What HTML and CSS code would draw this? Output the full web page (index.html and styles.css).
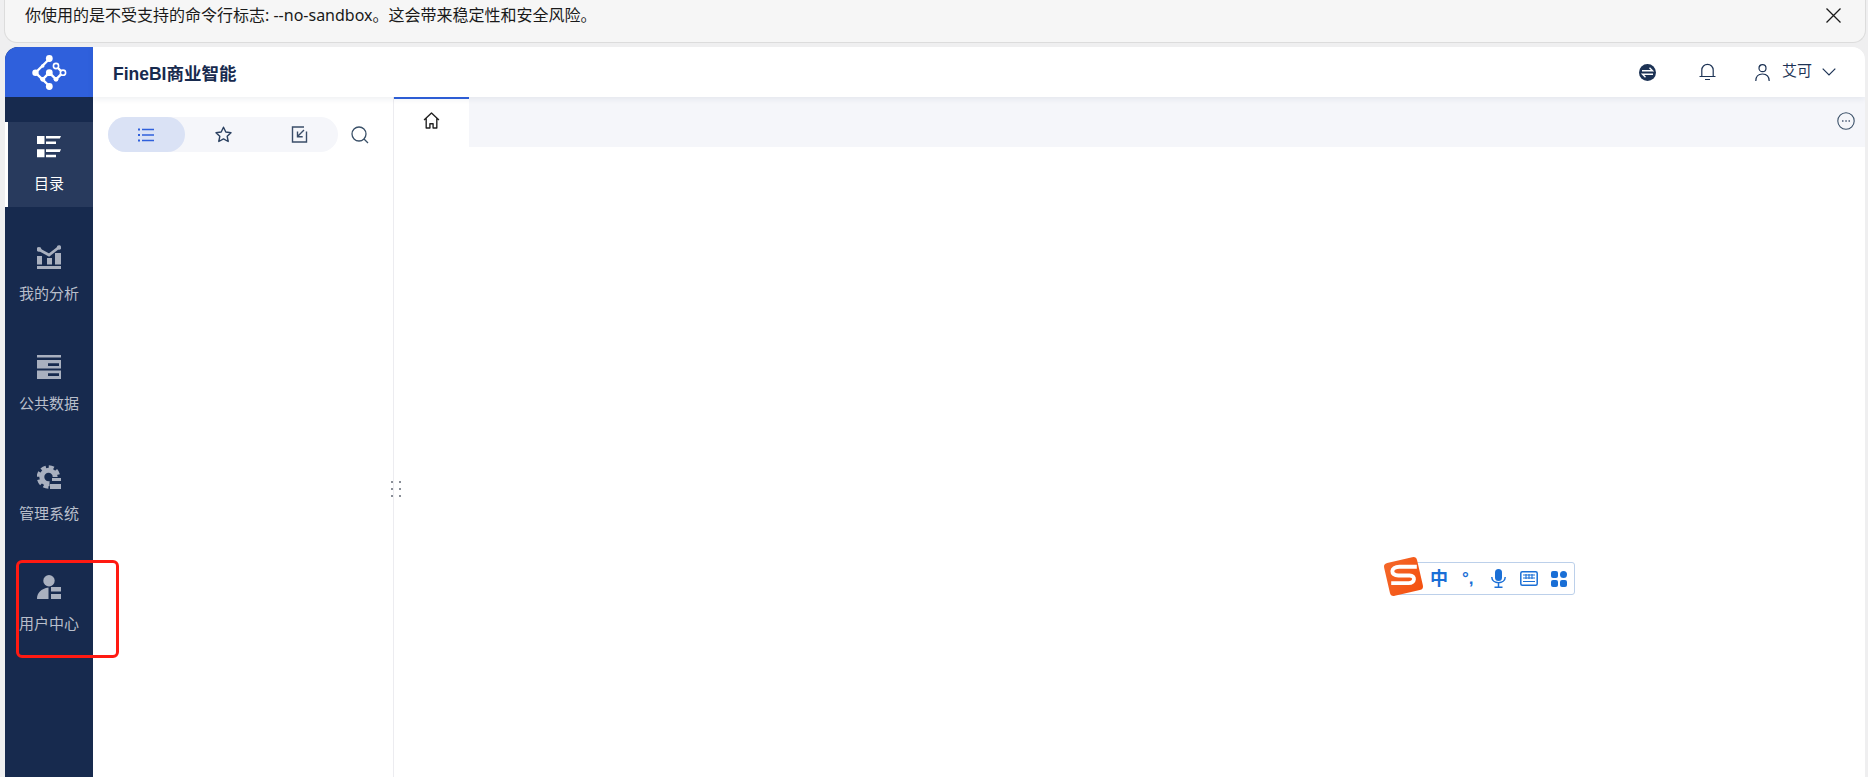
FILE: index.html
```html
<!DOCTYPE html>
<html lang="zh">
<head>
<meta charset="utf-8">
<title>FineBI</title>
<link rel="stylesheet" href="styles.css">
</head>
<body>
<div class="infobar">
  <span class="infobar-text">你使用的是不受支持的命令行标志: --no-sandbox。这会带来稳定性和安全风险。</span>
  <svg class="infobar-close" viewBox="0 0 15 15"><path d="M.5.500L14.500 14.500M14.500.500L.5 14.500" fill="none" stroke="#1a1a1a" stroke-width="1.300"/></svg>
</div>
<div class="window">
  <aside class="sidebar">
    <div class="logo">
      <svg viewBox="0 0 35 35" width="35" height="35">
        <g fill="none" stroke="#fff" stroke-width="2.400"><path d="M17.300 4L3.500 17.700L17.300 31M17.300 17.700L10.700 24.300M17.300 17.700L24 24.300L30.700 17.700L24 11"/></g>
        <g fill="#fff"><circle cx="17.300" cy="3.500" r="3.400"/><circle cx="3.500" cy="17.700" r="3.200"/><circle cx="17.300" cy="31.500" r="3.400"/><circle cx="17.300" cy="17.700" r="3.400"/><circle cx="10.700" cy="11" r="1.800"/><circle cx="10.700" cy="24.300" r="2.400"/><circle cx="24" cy="24.300" r="2.400"/></g>
        <g fill="#2f60dc" stroke="#fff" stroke-width="1.600"><circle cx="31" cy="17.700" r="2.600"/><circle cx="24" cy="11" r="2.600"/></g>
      </svg>
    </div>
    <nav class="nav">
      <div class="nav-item active">
        <svg class="nav-icon" viewBox="0 0 24 24"><path fill="#fff" d="M0 1h7.500v8H0zM9 1h15l-1.200 2.600H9zM9 6.400h10V9H9zM0 14.300h7.500v8H0zM9 14.300h15l-1.200 2.600H9zM9 19.700h10v2.600H9z"/></svg>
        <span class="nav-label">目录</span>
      </div>
      <div class="nav-item">
        <svg class="nav-icon" viewBox="0 0 24 24"><path fill="#a9b0bf" d="M0 21h24v3H0zM0 11h5v8.500H0zM10 13h5v6.500h-5zM18 8h6v11.500h-6z"/><path fill="none" stroke="#a9b0bf" stroke-width="2.800" d="M1 4l11 6L23 1.500"/><circle cx="2" cy="4.300" r="2.400" fill="#a9b0bf"/><circle cx="22" cy="2.500" r="2.200" fill="#a9b0bf"/></svg>
        <span class="nav-label">我的分析</span>
      </div>
      <div class="nav-item">
        <svg class="nav-icon" viewBox="0 0 24 24"><path fill="#a9b0bf" fill-rule="evenodd" d="M0 0h24v2.600H0zM0 5h24v8.600H0zM11 8.300V11h11V8.300zM0 15.600h24V24H0zM11 18.300V21h11v-2.700z"/></svg>
        <span class="nav-label">公共数据</span>
      </div>
      <div class="nav-item">
        <svg class="nav-icon" viewBox="0 0 24 24">
          <circle cx="11.500" cy="12" r="6.700" fill="none" stroke="#a9b0bf" stroke-width="5"/>
          <circle cx="11.500" cy="12" r="10" fill="none" stroke="#a9b0bf" stroke-width="3.500" stroke-dasharray="5 2.850"/>
          <rect class="gear-cut" x="12.500" y="12" width="12" height="12"/>
          <path fill="#a9b0bf" d="M15 13h9v3h-9zM13 19h11v5H13z"/>
        </svg>
        <span class="nav-label">管理系统</span>
      </div>
      <div class="nav-item">
        <svg class="nav-icon" viewBox="0 0 24 24"><circle cx="12" cy="5.700" r="5.700" fill="#a9b0bf"/><path fill="#a9b0bf" d="M0 24c0-6 4-10.500 11.500-11.500V24zM14 12h10v4.500H14zM14 19h10v5H14z"/></svg>
        <span class="nav-label">用户中心</span>
      </div>
    </nav>
  </aside>
  <div class="main">
    <header class="header">
      <span class="brand">FineBI商业智能</span>
      <div class="header-tools">
        <svg class="tool-swap" viewBox="0 0 17 17"><circle cx="8.500" cy="8.500" r="8.500" fill="#1d3355"/><path d="M3 6.800h10.500L10.500 3.800M14 10.200H3.500L6.500 13.200" fill="none" stroke="#fff" stroke-width="1.400"/></svg>
        <svg class="tool-bell" viewBox="0 0 17 18"><path d="M2.800 13V7a5.700 5.700 0 0 1 11.400 0v6M.5 13.500h16M6 16.500h5" fill="none" stroke="#1d3355" stroke-width="1.200"/></svg>
        <div class="user">
          <svg class="user-icon" viewBox="0 0 15 17"><circle cx="7.500" cy="4.200" r="3.500" fill="none" stroke="#1d3355" stroke-width="1.200"/><path d="M.8 17c0-4.500 2.500-7 6.700-7s6.700 2.500 6.700 7" fill="none" stroke="#1d3355" stroke-width="1.200"/></svg>
          <span class="user-name">艾可</span>
          <svg class="user-caret" viewBox="0 0 14 8"><path d="M.7.700L7 7l6.300-6.300" fill="none" stroke="#1d3355" stroke-width="1.200"/></svg>
        </div>
      </div>
    </header>
    <div class="body">
      <section class="panel">
        <div class="panel-top">
          <div class="seg">
            <div class="seg-item selected">
              <svg class="seg-list" viewBox="0 0 16 14"><path d="M4 1.500h12M4 7h12M4 12.500h12" stroke="#2f60dc" stroke-width="1.300" fill="none"/><path d="M0 .5h2v2H0zM0 6h2v2H0zM0 11.500h2v2H0z" fill="#2f60dc"/></svg>
            </div>
            <div class="seg-item">
              <svg class="seg-icon" viewBox="0 0 17 17"><path d="M8.500 1.200l2.300 4.800 5.200.7-3.800 3.600 1 5.200-4.700-2.600-4.700 2.600 1-5.200L1 6.700l5.200-.7z" fill="none" stroke="#2a4060" stroke-width="1.400" stroke-linejoin="round"/></svg>
            </div>
            <div class="seg-item">
              <svg class="seg-icon" viewBox="0 0 17 17"><path d="M13 1H1.500v15h14V5.500" fill="none" stroke="#3a4d68" stroke-width="1.400"/><path d="M13 4L7 10M6.500 5.500v5.200h5.200" fill="none" stroke="#3a4d68" stroke-width="1.400"/></svg>
            </div>
          </div>
          <svg class="search" viewBox="0 0 18 18"><circle cx="8" cy="8" r="7" fill="none" stroke="#3a5068" stroke-width="1.300"/><path d="M13 13l4 4" stroke="#3a5068" stroke-width="1.300"/></svg>
        </div>
      </section>
      <section class="content">
        <div class="tabs">
          <div class="tab">
            <svg class="home" viewBox="0 0 16 16"><path d="M1 7.500L8 1l7 6.500M3 6v9h3.500v-4h3v4H13V6" fill="none" stroke="#222" stroke-width="1.300" stroke-linejoin="round"/></svg>
          </div>
          <svg class="more" viewBox="0 0 18 18"><circle cx="9" cy="9" r="8.200" fill="none" stroke="#3a5068" stroke-width="1.100"/><path d="M5 8.200h1.500v1.500H5zM8.300 8.200h1.500v1.500H8.300zM11.500 8.200H13v1.500h-1.500z" fill="#4a5c76"/></svg>
        </div>
      </section>
    </div>
  </div>
</div>
<div class="grip"><i></i><i></i><i></i><i></i><i></i><i></i></div>
<div class="ime">
  <svg class="ime-logo" viewBox="0 0 40 40">
    <defs><linearGradient id="imeOrange" x1="0" y1="0" x2="1" y2="1"><stop offset="0" stop-color="#f4682a"/><stop offset="1" stop-color="#f4500f"/></linearGradient></defs>
    <rect x="3.500" y="3.500" width="33" height="33" rx="4" fill="url(#imeOrange)" transform="rotate(-13 20 20)"/>
    <path d="M33 10.500H16c-9 0-9 8.500-1 8.500h11c6 0 5.500 7.500-1 7.500H8" fill="none" stroke="#fff" stroke-width="3.800"/>
  </svg>
  <span class="ime-zh">中</span>
  <span class="ime-punct">°,</span>
  <svg class="ime-mic" viewBox="0 0 15 19"><rect x="4" y="0" width="7" height="12" rx="3.500" fill="#1a6fd6"/><path d="M.8 8c0 7.500 13.400 7.500 13.400 0M7.500 14v4M3.500 18.300h8" fill="none" stroke="#1a6fd6" stroke-width="1.500"/></svg>
  <svg class="ime-keys" viewBox="0 0 18 15"><rect x=".8" y=".8" width="16.400" height="13.400" rx="1.500" fill="none" stroke="#1a6fd6" stroke-width="1.500"/><path d="M3 4h12M3 7h12M3 10.500h12M6 3v5M9 3v5M12 3v5" stroke="#1a6fd6" stroke-width="1.100"/></svg>
  <svg class="ime-grid" viewBox="0 0 16 16"><g fill="#1a6fd6"><rect width="7" height="7" rx="2"/><rect x="9" width="7" height="7" rx="3.500"/><rect y="9" width="7" height="7" rx="2"/><rect x="9" y="9" width="7" height="7" rx="2"/></g></svg>
</div>
<div class="highlight"></div>
</body>
</html>
```
FILE: styles.css
```css
* { box-sizing: border-box; }
html, body { margin: 0; height: 100%; }
body {
  background: #efeff0;
  font-family: "Liberation Sans", "Noto Sans CJK SC", sans-serif;
  overflow: hidden;
  height: 777px;
  display: flex;
  flex-direction: column;
  position: relative;
}
svg { display: block; flex: none; }

.infobar {
  height: 43px;
  flex: none;
  background: #f6f6f6;
  border: 1px solid #dcdcdc;
  border-top: 0;
  border-radius: 0 0 13px 13px;
  margin: 0 2px 0 4px;
  display: flex;
  justify-content: space-between;
  padding: 0 24px 0 20px;
  color: #1a1a1a;
  font-family: "Noto Sans", "Noto Sans CJK SC", sans-serif;
  font-size: 16px;
}
.infobar-text { margin-top: 4px; line-height: 22px; }
.infobar-close { width: 15px; height: 15px; margin-top: 8px; }

.window {
  flex: 1;
  margin: 4px 3px 0 5px;
  display: flex;
  background: #fff;
  border-radius: 13px 13px 0 0;
  overflow: hidden;
}

.sidebar { width: 88px; flex: none; background: #172a4e; display: flex; flex-direction: column; }
.logo { height: 50px; background: #2f60dc; display: flex; align-items: center; justify-content: center; }
.nav { display: flex; flex-direction: column; gap: 25px; padding-top: 25px; }
.nav-item {
  height: 85px;
  display: flex;
  flex-direction: column;
  align-items: center;
  padding-top: 13px;
  color: #b9bfcb;
}
.nav-item.active { background: #283a5d; box-shadow: inset 3px 0 0 #fff; color: #fff; }
.nav-icon { width: 24px; height: 24px; }
.gear-cut { fill: #172a4e; }
.nav-label { font-size: 15px; line-height: 20px; margin-top: 15px; white-space: nowrap; }

.main { flex: 1; display: flex; flex-direction: column; min-width: 0; }
.header {
  height: 50px;
  flex: none;
  display: flex;
  align-items: center;
  justify-content: space-between;
  padding: 0 29px 0 20px;
  background: #fff;
  box-shadow: 0 2px 6px rgba(30, 50, 90, .08);
  position: relative;
}
.brand { font-size: 17.500px; font-weight: 700; color: #172a4e; }
.header-tools { display: flex; align-items: center; }
.tool-swap { width: 17px; height: 17px; }
.tool-bell { width: 17px; height: 18px; margin-left: 43px; }
.user { display: flex; align-items: center; margin-left: 39px; }
.user-icon { width: 15px; height: 17px; }
.user-name { font-size: 15px; line-height: 18px; color: #1d3355; margin-left: 12px; margin-right: 1px; padding-bottom: 2px; }
.user-caret { width: 14px; height: 8px; margin-left: 9px; }

.body { flex: 1; display: flex; min-height: 0; }
.panel { width: 301px; flex: none; border-right: 1px solid #ececf0; padding: 20px 0 0 15px; }
.panel-top { display: flex; align-items: center; }
.seg { width: 230px; height: 35px; background: #f5f6fa; border-radius: 18px; display: flex; }
.seg-item { width: 76.700px; display: flex; align-items: center; justify-content: center; border-radius: 18px; }
.seg-item.selected { background: #dae2f5; }
.seg-list { width: 16px; height: 14px; }
.seg-icon { width: 17px; height: 17px; }
.search { width: 18px; height: 18px; margin-left: 13px; }

.content { flex: 1; min-width: 0; }
.tabs {
  height: 50px;
  background: #f5f6fa;
  display: flex;
  justify-content: space-between;
  padding-right: 10px;
}
.tab {
  width: 75px;
  background: #fff;
  border-top: 2px solid #2f60dc;
  display: flex;
  align-items: flex-start;
  justify-content: center;
  padding-top: 13px;
}
.home { width: 17px; height: 17px; }
.more { width: 18px; height: 18px; margin-top: 15px; }

.grip {
  position: absolute;
  left: 391px;
  top: 481px;
  display: grid;
  grid-template-columns: 2px 2px;
  column-gap: 6px;
  row-gap: 5px;
}
.grip i { width: 2px; height: 2px; background: #8a8f98; display: block; }

.ime {
  position: absolute;
  left: 1396px;
  top: 562px;
  width: 179px;
  height: 33px;
  background: #fff;
  border: 1px solid #bcd0ea;
  border-radius: 3px;
  display: flex;
  align-items: center;
  padding-left: 33px;
  gap: 14px;
}
.ime-logo { position: absolute; left: -14px; top: -7px; width: 41px; height: 41px; }
.ime-zh { color: #1a6fd6; font-size: 18px; font-weight: 700; line-height: 20px; }
.ime-punct { color: #1a6fd6; font-size: 17px; font-weight: 700; line-height: 20px; width: 15px; white-space: nowrap; }
.ime-mic { width: 15px; height: 19px; }
.ime-keys { width: 18px; height: 15px; }
.ime-grid { width: 16px; height: 16px; margin-left: -1px; }

.highlight {
  position: absolute;
  left: 16px;
  top: 560px;
  width: 103px;
  height: 98px;
  border: 3px solid #ff1a12;
  border-radius: 6px;
  pointer-events: none;
}
```
